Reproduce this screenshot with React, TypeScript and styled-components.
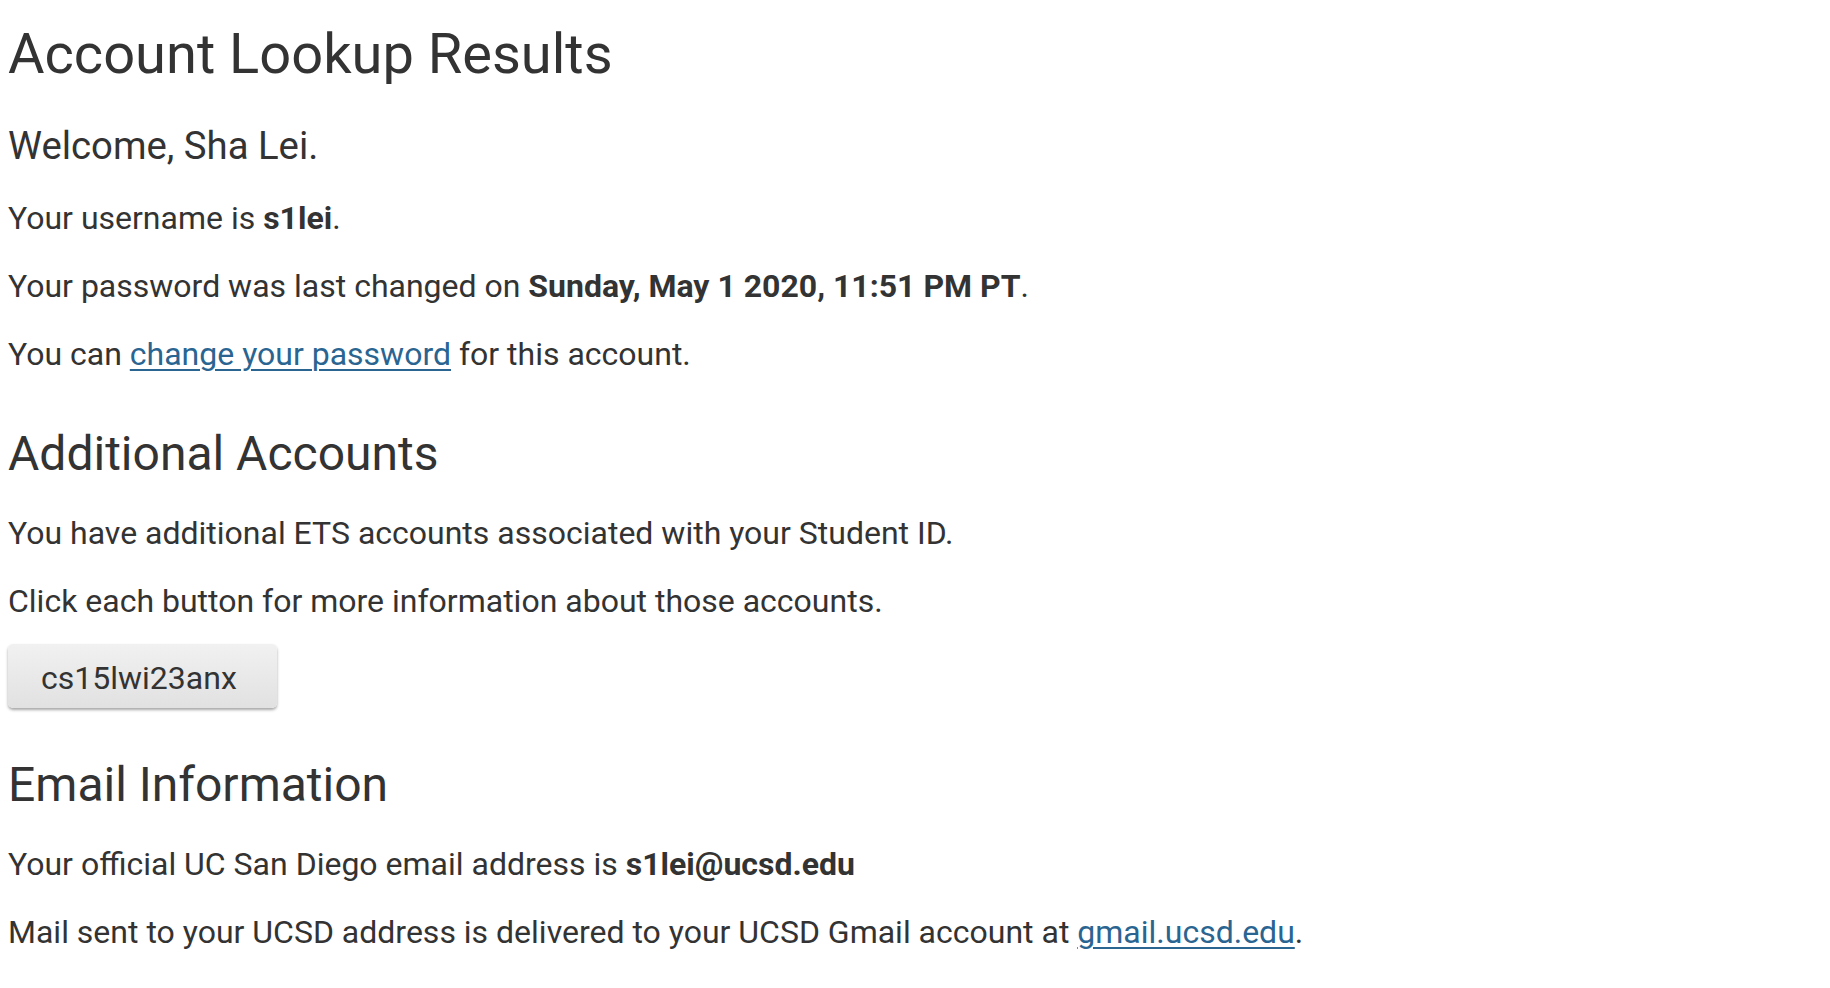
import React from "react";
import styled, { createGlobalStyle } from "styled-components";

const Global = createGlobalStyle`
  html, body { margin: 0; padding: 0; background: #fff; }
  body {
    font-family: Roboto, "Helvetica Neue", Arial, sans-serif;
    color: #333;
    font-size: 32px;
    line-height: 46px;
  }
`;

const Page = styled.main`
  padding: 0 8px;
  display: flow-root;
`;

const Title = styled.h1`
  font-size: 56px;
  font-weight: 400;
  line-height: 64px;
  margin: 22px 0 38px;
`;

const Welcome = styled.h3`
  font-size: 38.3px;
  font-weight: 400;
  line-height: 44px;
  margin: 0 0 27px;
`;

const SectionTitle = styled.h2`
  font-size: 48px;
  font-weight: 400;
  line-height: 56px;
  margin: 49px 0 28px;
`;

const Para = styled.p`
  margin: 0 0 22px;
`;

const Link = styled.a`
  color: #2a6592;
  text-decoration: underline;
  text-decoration-thickness: 2px;
  text-underline-offset: 4px;
`;

const ButtonRow = styled.div`
  display: flex;
  gap: 12px;
  margin-top: -2px;
`;

const AccountButton = styled.button`
  font-family: Roboto, "Helvetica Neue", Arial, sans-serif;
  font-size: 32px;
  line-height: 38px;
  color: #333;
  height: 64px;
  border: none;
  border-radius: 5px;
  background: linear-gradient(#f1f1f1, #e1e1e1);
  box-shadow: 0 2px 3px rgba(0, 0, 0, 0.35);
  padding: 3px 40px 0 33px;
  cursor: pointer;
`;

export default function App() {
  return (
    <>
      <Global />
      <Page>
        <Title>Account Lookup Results</Title>
        <Welcome>Welcome, Sha Lei.</Welcome>
        <Para>
          Your username is <b>s1lei</b>.
        </Para>
        <Para>
          Your password was last changed on <b>Sunday, May 1 2020, 11:51 PM PT</b>.
        </Para>
        <Para>
          You can <Link href="#">change your password</Link> for this account.
        </Para>

        <SectionTitle>Additional Accounts</SectionTitle>
        <Para>You have additional ETS accounts associated with your Student ID.</Para>
        <Para>Click each button for more information about those accounts.</Para>
        <ButtonRow>
          <AccountButton>cs15lwi23anx</AccountButton>
        </ButtonRow>

        <SectionTitle>Email Information</SectionTitle>
        <Para>
          Your official UC San Diego email address is <b>s1lei@ucsd.edu</b>
        </Para>
        <Para>
          Mail sent to your UCSD address is delivered to your UCSD Gmail account at{" "}
          <Link href="#">gmail.ucsd.edu</Link>.
        </Para>
      </Page>
    </>
  );
}
